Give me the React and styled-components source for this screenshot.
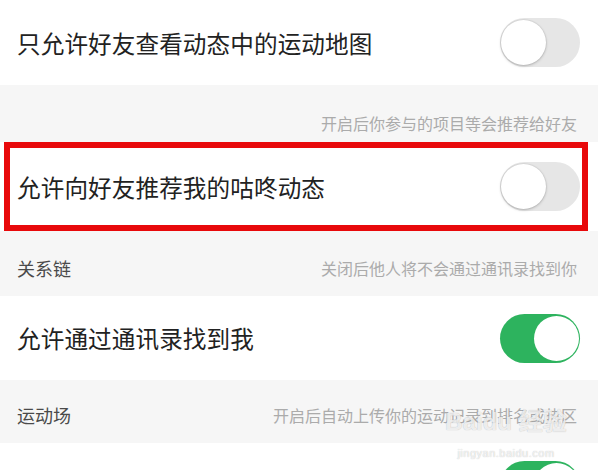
import React from "react";
import styled, { createGlobalStyle } from "styled-components";

const GlobalStyle = createGlobalStyle`
  body {
    margin: 0;
    background-color: #f6f6f6;
    font-family: "Noto Sans CJK SC", "Noto Sans", sans-serif;
  }
`;

const Page = styled.div`
  position: relative;
  width: 598px;
  height: 470px;
  overflow: hidden;
  background-color: #f6f6f6;
`;

const Row = styled.div`
  position: relative;
  display: flex;
  align-items: center;
  justify-content: space-between;
  height: ${({ height }) => height}px;
  padding: 0 18px 0 17px;
  background-color: #fff;
  box-sizing: border-box;

  ${({ highlighted }) =>
    highlighted &&
    `
    &::after {
      content: "";
      position: absolute;
      left: 4px;
      right: 10px;
      top: 0;
      bottom: 0;
      border: 6px solid #e8090b;
    }
  `}
`;

const Label = styled.span`
  font-size: 23.6px;
  color: #222;
  letter-spacing: 0.1px;
`;

const Section = styled.div`
  display: flex;
  align-items: ${({ align }) => align || "center"};
  justify-content: space-between;
  height: ${({ height }) => height}px;
  padding: ${({ pad }) => pad || "0"};
  padding-left: 17px;
  padding-right: 21px;
  box-sizing: border-box;
`;

const SectionTitle = styled.span`
  font-size: 18px;
  color: #4a4a4a;
`;

const Hint = styled.span`
  margin-left: auto;
  font-size: 16px;
  color: #ababab;
`;

const Track = styled.div`
  position: relative;
  width: 80px;
  height: 49px;
  margin-left: auto;
  border-radius: 25px;
  background-color: ${({ on }) => (on ? "#2db35e" : "#e6e6e6")};
  flex-shrink: 0;
`;

const Knob = styled.div`
  position: absolute;
  top: 2px;
  left: ${({ on }) => (on ? "34px" : "1px")};
  width: 45px;
  height: 45px;
  border-radius: 50%;
  background-color: #fff;
  box-shadow: ${({ on }) =>
    on ? "none" : "0 1px 3px rgba(0, 0, 0, 0.22), 0 0 0 1px rgba(0, 0, 0, 0.04)"};
`;

const Watermark = styled.div`
  position: absolute;
  left: 455px;
  top: 404px;
  width: 102px;
  display: flex;
  flex-direction: column;
  align-items: center;
  white-space: nowrap;
  color: rgba(255, 255, 255, 0.8);
  text-shadow: 0 0 1px rgba(0, 0, 0, 0.3);
  font-family: "Liberation Sans", "Noto Sans CJK SC", sans-serif;
  pointer-events: none;
`;

const MarkTitle = styled.span`
  font-size: 24px;
  font-weight: bold;
  line-height: 36px;
`;

const MarkUrl = styled.span`
  margin-top: 6px;
  font-size: 11px;
  line-height: 14px;
  letter-spacing: 0.5px;
`;

const Toggle = ({ on }) => (
  <Track on={on ? 1 : 0}>
    <Knob on={on ? 1 : 0} />
  </Track>
);

const App = () => {
  return (
    <Page>
      <GlobalStyle />
      <Row height={85}>
        <Label>只允许好友查看动态中的运动地图</Label>
        <Toggle />
      </Row>
      <Section height={57} align="flex-end" pad="0 0 7px 0">
        <Hint>开启后你参与的项目等会推荐给好友</Hint>
      </Section>
      <Row height={89} highlighted>
        <Label>允许向好友推荐我的咕咚动态</Label>
        <Toggle />
      </Row>
      <Section height={65} pad="8px 0 0 0">
        <SectionTitle>关系链</SectionTitle>
        <Hint>关闭后他人将不会通过通讯录找到你</Hint>
      </Section>
      <Row height={84}>
        <Label>允许通过通讯录找到我</Label>
        <Toggle on />
      </Row>
      <Section height={63} pad="6px 0 0 0">
        <SectionTitle>运动场</SectionTitle>
        <Hint>开启后自动上传你的运动记录到排名或热区</Hint>
      </Section>
      <Row height={84}>
        <Toggle on />
      </Row>
      <Watermark>
        <MarkTitle>Baidu 经验</MarkTitle>
        <MarkUrl>jingyan.baidu.com</MarkUrl>
      </Watermark>
    </Page>
  );
};

export default App;
